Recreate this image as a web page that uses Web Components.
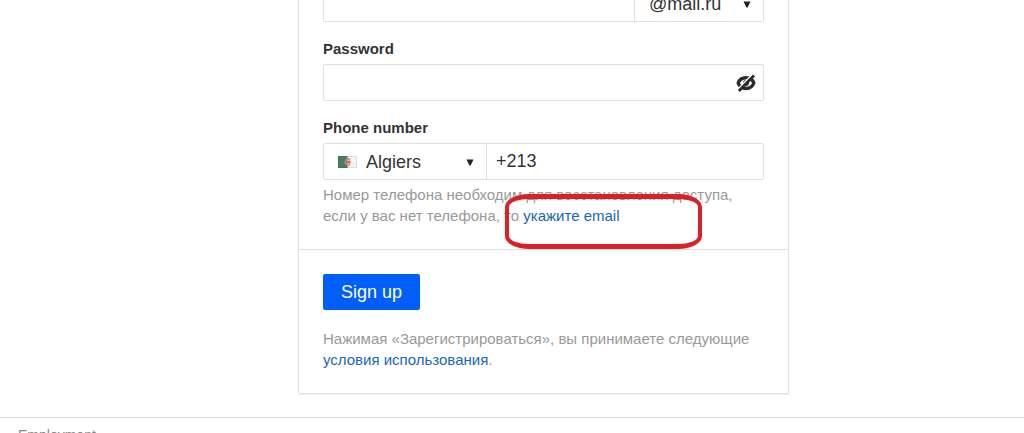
<!DOCTYPE html>
<html lang="ru">
<head>
<meta charset="utf-8">
<meta name="viewport" content="width=device-width, initial-scale=1">
<title>Sign up</title>
<style>
  body {
    margin: 0;
    height: 100vh;
    overflow: hidden;
    background: #fff;
    color: #333;
    font: 15px/20px "Liberation Sans", Arial, sans-serif;
  }
  main {
    display: flex;
    justify-content: center;
    padding-left: 63px;
  }
</style>
</head>
<body>
<main><signup-form></signup-form></main>
<page-footer><a href="#employment">Employment</a></page-footer>

<script>
/**
 * FormField - bold label above a bordered row of controls.
 */
class FormField extends HTMLElement {
  constructor() {
    super();
    this.attachShadow({ mode: 'open' });
    this.shadowRoot.innerHTML = `
      <style>
        :host { display: block; }
        .row {
          display: flex;
          box-sizing: border-box;
          height: 37px;
          border: 1px solid #e0e0e0;
          border-radius: 2px;
        }
        ::slotted(label) {
          display: block;
          margin-bottom: 5px;
          color: #333;
          font-weight: 700;
        }
      </style>
      <slot name="label"></slot>
      <div class="row"><slot></slot></div>
    `;
  }
}
customElements.define('form-field', FormField);

/**
 * SelectBox - wraps a native select, with a caret and an optional icon.
 */
class SelectBox extends HTMLElement {
  constructor() {
    super();
    this.attachShadow({ mode: 'open' });
    this.shadowRoot.innerHTML = `
      <style>
        :host {
          display: grid;
          grid-template-columns: auto 1fr auto;
          align-items: center;
          box-sizing: border-box;
          padding: 0 12px 0 14px;
        }
        ::slotted(select) { width: 100%; min-width: 0; }
        ::slotted(svg) { margin-right: 8px; }
        .caret { display: block; margin-top: 2px; fill: #222; pointer-events: none; }
      </style>
      <slot name="icon"><span></span></slot>
      <slot></slot>
      <svg class="caret" width="8" height="7" viewBox="0 0 8 7" aria-hidden="true"><path d="M0.500 0.500h7L4.600 6.500H3.400z"/></svg>
    `;
  }
}
customElements.define('select-box', SelectBox);

/**
 * MarkRing - hand-drawn style red ring laid over the text.
 */
class MarkRing extends HTMLElement {
  constructor() {
    super();
    this.attachShadow({ mode: 'open' });
    this.shadowRoot.innerHTML = `
      <style>
        :host {
          position: absolute;
          top: 10px;
          left: 182px;
          box-sizing: border-box;
          width: 197px;
          height: 55px;
          border: 5px solid #dc2027;
          border-width: 5px 4px;
          border-radius: 24px / 13px;
          pointer-events: none;
        }
      </style>
    `;
  }
}
customElements.define('mark-ring', MarkRing);

class SignupForm extends HTMLElement {
  constructor() {
    super();
    this.attachShadow({ mode: 'open' });
    this.shadowRoot.innerHTML = `
      <style>
        :host {
          display: block;
          flex: 0 1 491px;
          box-sizing: border-box;
          margin-top: -15px;
          border: 1px solid #e0e0e0;
          border-top: 0;
          border-radius: 2px;
          box-shadow: 0 1px 1px #f0f0f0;
        }
        .fields {
          display: flex;
          flex-direction: column;
          gap: 17px;
          padding: 0 24px 23px;
        }
        .submit {
          padding: 24px 24px 23px;
          border-top: 1px solid #e0e0e0;
        }
        input, select {
          box-sizing: border-box;
          height: 35px;
          margin: 0;
          padding: 0;
          border: 0;
          outline: 0;
          background: none;
          color: #333;
          font: inherit;
          font-size: 18px;
          appearance: none;
        }
        input {
          flex: 1;
          min-width: 0;
          padding: 0 9px;
        }
        select-box + input, input + select-box { border-left: 1px solid #e0e0e0; }
        .domain { width: 129px; }
        .country { width: 162px; }
        .eye {
          display: flex;
          align-items: center;
          padding: 0 7px;
          border: 0;
          background: none;
        }
        p { margin: 0; color: #999; line-height: 21px; }
        .hint { margin-top: 4px; }
        .terms { margin-top: 18px; }
        a { color: #1a66b8; text-decoration: none; }
        .send {
          display: block;
          height: 36px;
          padding: 0 18px;
          border: 0;
          border-radius: 2px;
          background: #005ff9;
          color: #fff;
          font: inherit;
          font-size: 18px;
        }
        .note { position: relative; }
      </style>
      <form>
        <div class="fields">
          <form-field>
            <input id="login" type="text" aria-label="Account name">
            <select-box class="domain">
              <select aria-label="Domain"><option>@mail.ru</option></select>
            </select-box>
          </form-field>

          <form-field>
            <label slot="label" for="password">Password</label>
            <input id="password" type="password">
            <button class="eye" type="button" aria-label="Show password">
              <svg width="20" height="18" viewBox="0 0 20 18" fill="none" stroke="#2b2b2b">
                <path d="M2.200 9C3.500 5.500 6.500 3.700 10 3.700s6.500 1.800 7.800 5.300c-1.300 3.800-4.300 5.500-7.800 5.500S3.500 12.800 2.200 9z" stroke-width="3.400"/>
                <circle cx="10" cy="9" r="3" fill="#2b2b2b" stroke="none"/>
                <path d="M1.500 16L16.500 0.500" stroke="#fff" stroke-width="1.800"/>
                <path d="M2.800 17L18 1.500" stroke-width="2.800"/>
              </svg>
            </button>
          </form-field>

          <div>
            <form-field>
              <label slot="label" for="phone">Phone number</label>
              <select-box class="country">
                <svg slot="icon" width="20" height="14" viewBox="0 0 20 14" aria-hidden="true">
                  <rect x="0.500" y="1.500" width="18" height="11" fill="#f3f3f1" stroke="#ddd"/>
                  <path d="M0 1h9.500v12H0z" fill="#3f8160"/>
                  <path d="M0 12.500h9.500M0.500 1v12" stroke="#55655d"/>
                  <path d="M12 4.500a3 3 0 1 0 0 5" fill="none" stroke="#d98078" stroke-width="1.500"/>
                  <path d="M11 5l.8 1.300 1.700.2-1.200 1 .3 1.600L11 8.300l-1.500.8.3-1.600-1.200-1 1.700-.2z" fill="#df5a58"/>
                </svg>
                <select aria-label="Country"><option>Algiers</option></select>
              </select-box>
              <input id="phone" type="tel" value="+213">
            </form-field>
            <div class="note">
              <p class="hint">Номер телефона необходим для восстановления доступа,<br>если у вас нет телефона, то <a href="#email">укажите email</a></p>
              <mark-ring></mark-ring>
            </div>
          </div>
        </div>

        <div class="submit">
          <button class="send" type="button">Sign up</button>
          <p class="terms">Нажимая «Зарегистрироваться», вы принимаете следующие <a href="#terms">условия использования</a>.</p>
        </div>
      </form>
    `;
  }
}
customElements.define('signup-form', SignupForm);

class PageFooter extends HTMLElement {
  constructor() {
    super();
    this.attachShadow({ mode: 'open' });
    this.shadowRoot.innerHTML = `
      <style>
        :host {
          display: block;
          margin-top: 23px;
          padding: 7px 18px;
          border-top: 1px solid #dcdcdc;
          font-size: 14px;
        }
        ::slotted(a) { color: #888; text-decoration: none; }
      </style>
      <slot></slot>
    `;
  }
}
customElements.define('page-footer', PageFooter);
</script>
</body>
</html>
